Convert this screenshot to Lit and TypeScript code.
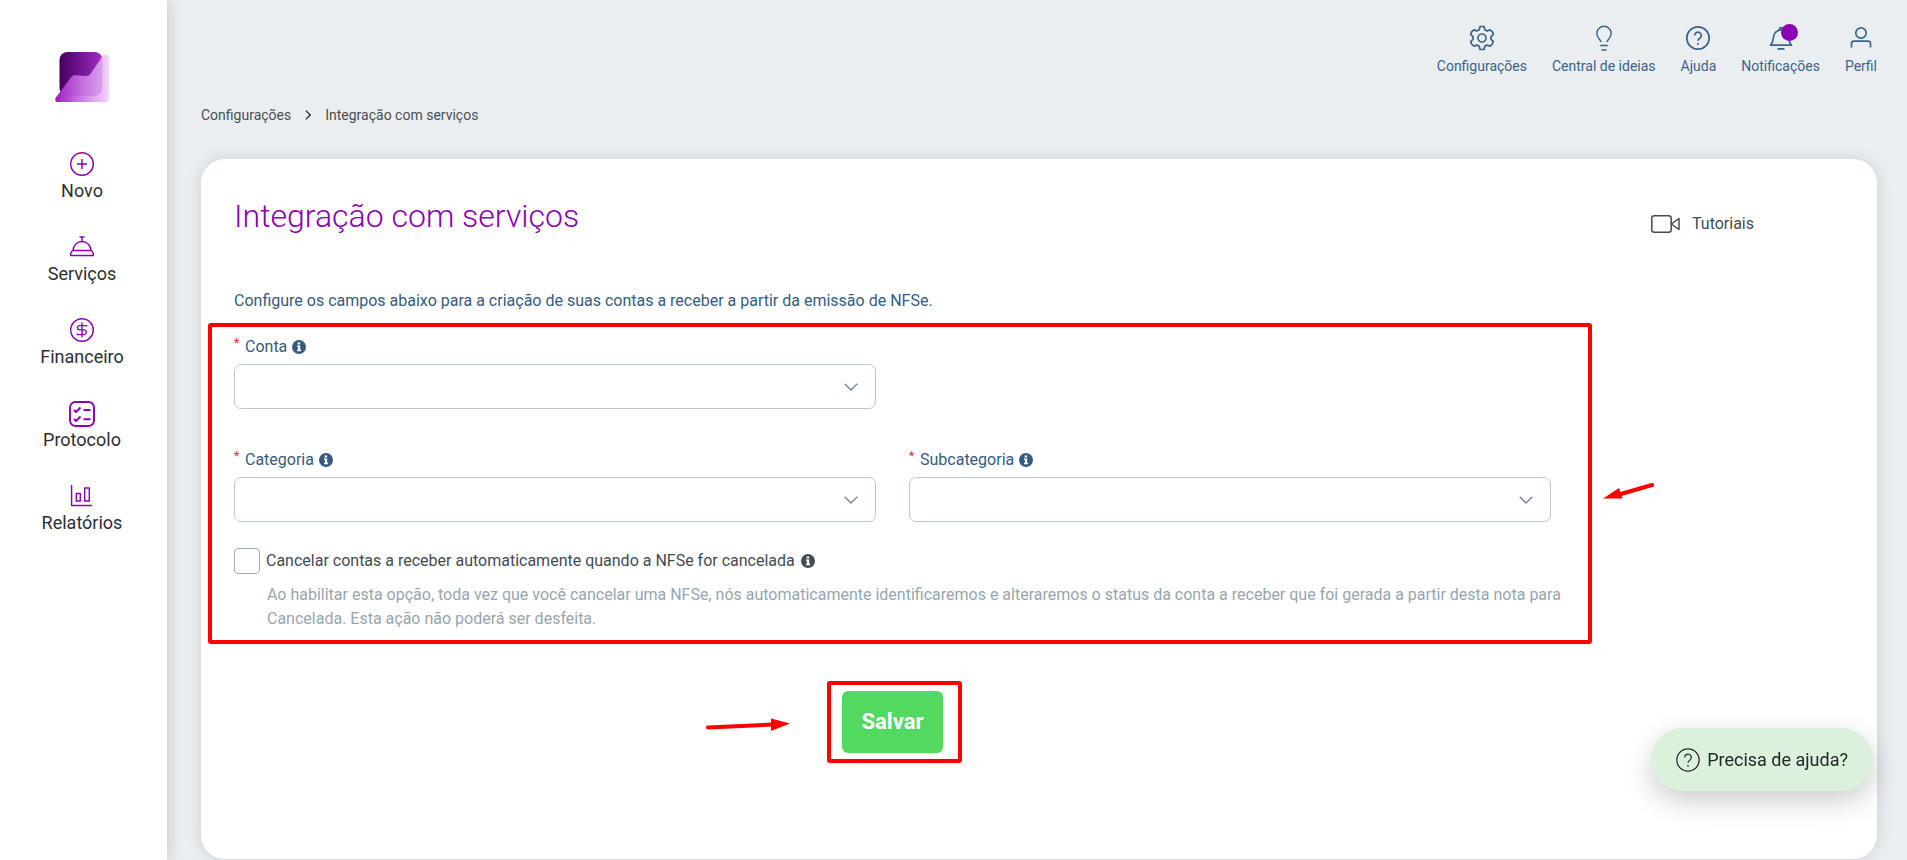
import { LitElement, html, css, svg } from "lit";
import { customElement, property } from "lit/decorators.js";

const icons: Record<string, unknown> = {
  plus: svg`<circle cx="12" cy="12" r="11.3"/><path d="M12 7v10M7 12h10"/>`,
  bell: svg`<path d="M9.5 2h5M12 2v4.300M3 15.500a9 9 0 0 1 18 0M2.400 15.500h19.200l1.700 2.800v2.200H.7v-2.200z"/>`,
  dollar: svg`<circle cx="12" cy="12" r="11.3"/><path d="M12 4.500v15M16.600 8.600v-1h-7a2.100 2.100 0 0 0 0 4.300h4.800a2.400 2.400 0 0 1 0 4.700H7.200v-1"/>`,
  list: svg`<rect x="1" y="1" width="24" height="24" rx="5.500" stroke-width="1.900"/><path d="m5 9 2 2 4.500-4.500M5 18l2 2 4.500-4.500M14.500 9h7M14.500 18.200h7" stroke-width="1.900"/>`,
  chart: svg`<path d="M1.600 1v20.500H22M6.300 9.500h4v7.500h-4zM14.700 4h4.600v13h-4.600z"/>`,
  gear: svg`<circle cx="12" cy="12" r="4"/><path d="M10 .5h4l.8 3.200 2.200 1.200 3.200-1 2.700 2.400.3 2.300-2.200 2v2.800l2.200 2-.9 2.800-2.300 1.900-3-1-2.200 1.200-.8 3.200h-4l-.8-3.200L7 19.100l-3 1-2.300-1.900-.9-2.800 2.200-2v-2.800l-2.200-2 .3-2.300 2.700-2.400 3.200 1 2.200-1.200z" stroke-linejoin="round"/>`,
  bulb: svg`<path d="M9 16c-.3-2.300-4.200-4.300-4.200-8.500a7.200 7.200 0 0 1 14.400 0c0 4.200-3.900 6.200-4.200 8.500M8.200 19.500h7.600M9.400 24h5.200"/>`,
  help: svg`<circle cx="12" cy="12" r="11.200"/><path d="M8.700 9.500a3.300 3.300 0 1 1 5.200 2.600c-1.200.8-1.900 1.200-1.900 2.600"/><path d="M12 17v1.700"/>`,
  alert: svg`<path d="M1.500 19.200h21c-2-2.200-2.800-4.200-3-8-.2-4-3.300-7.200-7.500-7.200s-7.300 3.200-7.500 7.200c-.2 3.800-1 5.800-3 8zM10.300 3.800c-.2-3 3.600-3 3.400 0M8.500 22.800h7"/>`,
  user: svg`<circle cx="12" cy="7" r="5.200"/><path d="M2.500 21.500v-3.700c0-1.600 1-2.600 2.600-2.600h13.800c1.600 0 2.600 1 2.600 2.600v3.700"/>`,
};

@customElement("ui-icon")
export class UiIcon extends LitElement {
  @property() name = "";
  @property({ type: Number }) size = 24;
  @property({ type: Number }) weight = 1.4;

  static styles = css`
    :host {
      display: block;
      line-height: 0;
    }
    .glyph {
      fill: none;
      stroke: currentColor;
    }
  `;

  render() {
    const box = this.name === "list" ? 26 : 24;
    return html`<svg class="glyph" width=${this.size} height=${this.size} viewBox="0 0 ${box} ${box}" overflow="visible" stroke-width=${this.weight} stroke-linejoin="round" aria-hidden="true">${icons[this.name]}</svg>`;
  }
}

const infoDot = html`<svg class="info" viewBox="0 0 14 14" aria-hidden="true">
  <circle cx="7" cy="7" r="7" fill="currentColor" />
  <path d="M5.600 2.400h2.600v2H5.600zM5 5.500h3.200v4.300h.9v1.500H5V9.800h.9V7H5z" fill="#fff" />
</svg>`;

@customElement("app-root")
export class AppRoot extends LitElement {
  static styles = css`
    :host {
      display: block;
      font-family: Roboto, "Noto Sans", sans-serif;
      font-size: 16px;
      line-height: 24px;
      color: #444b52;
    }
    * {
      box-sizing: border-box;
    }
    a {
      color: inherit;
      text-decoration: none;
    }
    .page {
      display: flex;
      min-height: 100vh;
      background: #eaeef1;
    }
    .sidebar {
      flex: none;
      width: 167px;
      padding: 52px 3px 0 0;
      background: #fff;
      box-shadow: 0 0 16px rgba(0, 0, 0, 0.18);
      display: flex;
      flex-direction: column;
      align-items: center;
    }
    .logo {
      display: block;
      height: 50px;
    }
    .menu {
      display: flex;
      flex-direction: column;
      gap: 31px;
      padding-top: 50px;
      color: #8a00b5;
    }
    .menu a {
      display: flex;
      flex-direction: column;
      align-items: center;
      height: 52px;
      font-size: 18px;
    }
    .menu ui-icon {
      height: 27px;
    }
    .menu span {
      color: #2b2f33;
    }
    .main {
      flex: 1;
      min-width: 0;
      display: flex;
      flex-direction: column;
      padding: 26px 30px 1px 34px;
    }
    .topnav {
      display: flex;
      justify-content: flex-end;
      gap: 25px;
      font-size: 14px;
      line-height: 20px;
      color: #3b648a;
    }
    .topnav a {
      display: flex;
      flex-direction: column;
      align-items: center;
      gap: 6px;
    }
    .bellbox {
      position: relative;
    }
    .badge {
      position: absolute;
      left: 12px;
      top: -2px;
      width: 17px;
      height: 17px;
      border-radius: 50%;
      background: #8a00b5;
    }
    .crumbs {
      display: flex;
      align-items: center;
      gap: 14px;
      margin: 29px 0 34px;
      font-size: 14px;
      line-height: 20px;
      color: #4a4f54;
    }
    .card {
      flex: 1;
      padding: 39px 34px 32px 33px;
      background: #fff;
      border-radius: 24px;
      box-shadow: 0 0 16px rgba(0, 0, 0, 0.12);
    }
    .head {
      display: flex;
      justify-content: space-between;
      padding-right: 89px;
    }
    h1 {
      margin: 0;
      font-size: 32px;
      line-height: 36px;
      font-weight: 300;
      color: #8a00b5;
    }
    .tutorials {
      display: flex;
      align-items: center;
      gap: 12px;
      height: 24px;
      margin-top: 14px;
    }
    .intro {
      margin: 53px 0 0;
      color: #355b80;
    }
    .form {
      margin-right: 292px;
    }
    .fields {
      position: relative;
      display: grid;
      grid-template-columns: 1fr 1fr;
      column-gap: 33px;
      row-gap: 39px;
      padding-top: 22px;
    }
    .subcategory,
    .category {
      grid-row: 2;
    }
    .field label {
      display: flex;
      align-items: center;
      height: 24px;
      gap: 5px;
      margin-bottom: 5px;
      color: #355b80;
    }
    .required {
      align-self: flex-start;
      width: 6px;
      font-size: 12px;
      line-height: 16px;
      color: #f5221b;
    }
    .info {
      width: 14px;
      height: 14px;
    }
    .selectbox {
      display: grid;
      align-items: center;
    }
    .selectbox > * {
      grid-area: 1 / 1;
    }
    select {
      appearance: none;
      width: 100%;
      height: 45px;
      padding: 0 40px 0 16px;
      border: 1px solid #bdc6d0;
      border-radius: 7px;
      background: #fff;
      font: inherit;
      color: inherit;
    }
    .chevron {
      justify-self: end;
      margin-right: 18px;
      pointer-events: none;
    }
    .option {
      grid-column: 1 / -1;
      margin-top: -13px;
    }
    .option label {
      display: flex;
      align-items: center;
      gap: 6px;
    }
    .check {
      appearance: none;
      width: 26px;
      height: 26px;
      margin: 0;
      border: 1px solid #9fabb8;
      border-radius: 4px;
      background: #fff;
    }
    .hint {
      margin: 9px -16px 0 0;
      padding-left: 33px;
      color: #98a5ae;
    }
    .actions {
      display: flex;
      justify-content: center;
      padding-top: 60px;
    }
    .savebox {
      position: relative;
    }
    .save {
      display: block;
      height: 62px;
      padding: 0 20px;
      border: 0;
      border-radius: 6px;
      background: #52da60;
      color: #fff;
      font: 700 22px/28px Roboto, sans-serif;
    }
    .mark {
      position: absolute;
      border: 4px solid #f00;
      border-radius: 3px;
      pointer-events: none;
    }
    .mark-fields {
      inset: 10px -41px -13px -26px;
    }
    .mark-save {
      inset: -10px -19px -10px -15px;
    }
    .arrow {
      position: absolute;
      fill: #f00;
      stroke: #f00;
      stroke-linecap: round;
      pointer-events: none;
    }
    .arrow-fields {
      left: calc(100% + 51px);
      top: 168px;
    }
    .arrow-save {
      right: calc(100% + 51px);
      top: 25px;
    }
    .assist {
      position: fixed;
      right: 34px;
      bottom: 69px;
      display: flex;
      align-items: center;
      gap: 7px;
      height: 63px;
      padding: 0 25px;
      border: 0;
      border-radius: 32px;
      background: #dbf0dd;
      box-shadow: 0 10px 28px rgba(0, 0, 0, 0.2);
      color: #222a26;
      font: 18px/24px Roboto, sans-serif;
    }
  `;

  private menuItem(icon: string, text: string) {
    return html`<a href="#"><ui-icon name=${icon} size=${icon === "list" ? 26 : 24}></ui-icon><span>${text}</span></a>`;
  }

  private navItem(icon: string, text: string) {
    return html`<a href="#"><span class="bellbox"><ui-icon name=${icon} weight=${icon === "bulb" ? 1.4 : 1.7}></ui-icon>${icon === "alert" ? html`<span class="badge"></span>` : ""}</span><span>${text}</span></a>`;
  }

  private field(id: string, text: string) {
    return html`<div class="field ${id}">
      <label for=${id}><span class="required">*</span>${text} ${infoDot}</label>
      <div class="selectbox">
        <select id=${id}><option></option></select>
        <svg class="chevron" width="14" height="8" viewBox="0 0 14 8" fill="none" stroke="#71839a" stroke-width="1.300"><path d="m.7.8 6.300 6.200L13.300.8" /></svg>
      </div>
    </div>`;
  }

  render() {
    return html`<div class="page">
      <aside class="sidebar">
        <svg class="logo" width="54" height="50" viewBox="0 0 54 50" role="img" aria-label="Logo">
          <defs>
            <linearGradient id="dark"><stop offset="0" stop-color="#460060" /><stop offset="1" stop-color="#a02cc4" /></linearGradient>
            <linearGradient id="light"><stop offset="0" stop-color="#9a1cc0" /><stop offset=".45" stop-color="#c878e0" /><stop offset="1" stop-color="#f6d4fd" /></linearGradient>
          </defs>
          <rect x="4.500" width="43" height="44" rx="8" fill="url(#dark)" />
          <path d="M47.500 4.300C49 2 54 1.600 54 5.500V47a3 3 0 0 1-3 3H2.500C.5 50-.4 47.500.8 45.500L16 25.500c1.300-1.800 2.300-2.300 4-2.300l11 .7c2.500.1 3.200-.3 4.500-2.200z" fill="url(#light)" />
          <path d="M46.300 6c.8 1 1.200 2.300 1.200 4v26a8 8 0 0 1-8 8h-27a8 8 0 0 1-6.500-4L16 25.500c1.300-1.800 2.300-2.300 4-2.300l11 .7c2.500.1 3.200-.3 4.500-2.200z" fill="#a030c8" opacity=".22" />
        </svg>
        <nav class="menu">
          ${this.menuItem("plus", "Novo")} ${this.menuItem("bell", "Serviços")} ${this.menuItem("dollar", "Financeiro")}
          ${this.menuItem("list", "Protocolo")} ${this.menuItem("chart", "Relatórios")}
        </nav>
      </aside>
      <main class="main">
        <nav class="topnav">
          ${this.navItem("gear", "Configurações")} ${this.navItem("bulb", "Central de ideias")} ${this.navItem("help", "Ajuda")}
          ${this.navItem("alert", "Notificações")} ${this.navItem("user", "Perfil")}
        </nav>
        <nav class="crumbs">
          <a href="#">Configurações</a>
          <svg width="6" height="10" viewBox="0 0 6 10" fill="none" stroke="#222" stroke-width="1.200"><path d="m.8.6 4.500 4.400L.8 9.400" /></svg>
          <a href="#">Integração com serviços</a>
        </nav>
        <section class="card">
          <div class="head">
            <h1>Integração com serviços</h1>
            <a class="tutorials" href="#">
              <svg width="29" height="18" viewBox="0 0 29 18" fill="none" stroke="#444b52" stroke-width="1.500" stroke-linejoin="round"><rect x=".8" y=".8" width="19.400" height="16.400" rx="2.500" /><path d="m20.300 9 7.700-5.500v11z" /></svg>
              Tutoriais
            </a>
          </div>
          <p class="intro">Configure os campos abaixo para a criação de suas contas a receber a partir da emissão de NFSe.</p>
          <form class="form" @submit=${(e: Event) => e.preventDefault()}>
            <div class="fields">
              ${this.field("account", "Conta")} ${this.field("category", "Categoria")} ${this.field("subcategory", "Subcategoria")}
              <div class="option">
                <label><input class="check" type="checkbox" />Cancelar contas a receber automaticamente quando a NFSe for cancelada ${infoDot}</label>
                <p class="hint">Ao habilitar esta opção, toda vez que você cancelar uma NFSe, nós automaticamente identificaremos e alteraremos o status da conta a receber que foi gerada a partir desta nota para Cancelada. Esta ação não poderá ser desfeita.</p>
              </div>
              <div class="mark mark-fields"></div>
              <svg class="arrow arrow-fields" width="52" height="20" viewBox="0 0 52 20"><path d="M50 4 17 13.500" stroke-width="4" /><path d="M1 17.500 17 7l3.500 10.500z" stroke="none" /></svg>
            </div>
            <div class="actions">
              <div class="savebox">
                <button class="save" type="submit">Salvar</button>
                <div class="mark mark-save"></div>
                <svg class="arrow arrow-save" width="86" height="18" viewBox="0 0 86 18"><path d="M3 11.500 68 8.500" stroke-width="4" /><path d="M85 7.500 66 2.500v12.500z" stroke="none" /></svg>
              </div>
            </div>
          </form>
        </section>
      </main>
      <button class="assist"><ui-icon name="help" weight="1.2"></ui-icon>Precisa de ajuda?</button>
    </div>`;
  }
}
